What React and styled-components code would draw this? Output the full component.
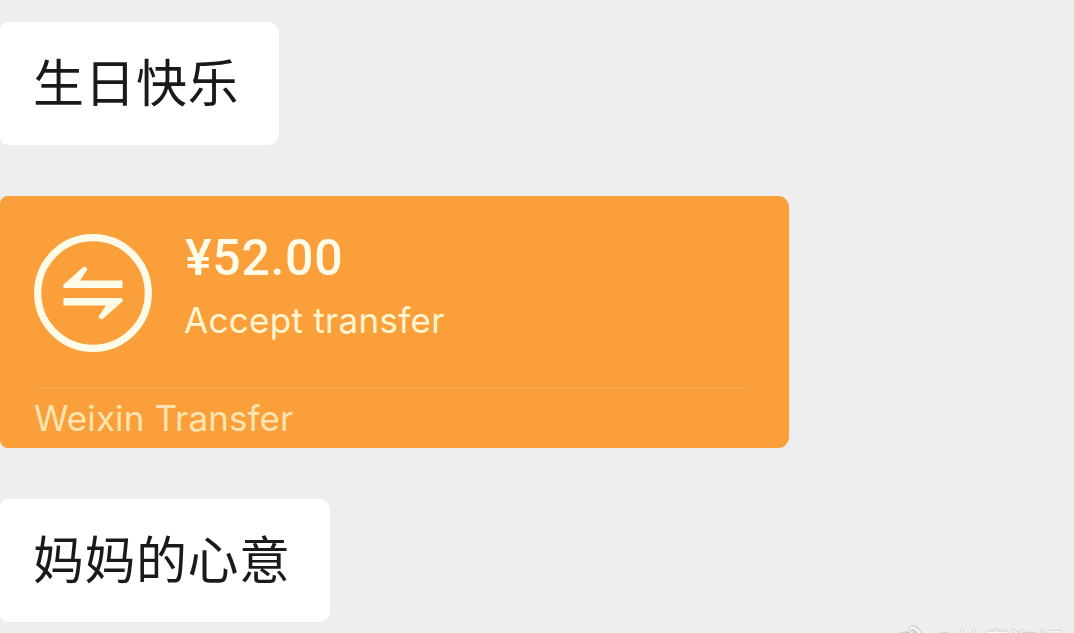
import React from 'react';
import styled, { createGlobalStyle } from 'styled-components';

const GlobalStyle = createGlobalStyle`
  * {
    box-sizing: border-box;
  }

  body {
    margin: 0;
    background: #eee;
    overflow: hidden;
  }
`;

const Chat = styled.main`
  position: relative;
  display: flex;
  flex-direction: column;
  align-items: flex-start;
  gap: 51px;
  height: 633px;
  padding-top: 22px;
  overflow: hidden;
  background: #eee;
  font-family: Inter, 'Noto Sans CJK SC', sans-serif;
`;

const Bubble = styled.div`
  display: flex;
  align-items: center;
  width: ${(props) => props.$width}px;
  height: 123px;
  flex-shrink: 0;
  padding: 0 0 7px 33px;
  border-radius: 8px 11px 11px 8px;
  background: #fff;
  color: #1a1a1a;
  font-family: 'Noto Sans CJK SC', sans-serif;
  font-size: 51px;
  line-height: 72px;
  letter-spacing: 0.5px;
  white-space: nowrap;
`;

const TransferCard = styled.section`
  width: 789px;
  height: 252px;
  flex-shrink: 0;
  padding: 38px 38px 0 34px;
  border-radius: 8px 11px 11px 8px;
  background: #fb9f3a;
`;

const TransferBody = styled.div`
  display: flex;
  gap: 32px;
  height: 154px;
`;

const TransferIcon = styled.svg`
  width: 118px;
  height: 118px;
  flex-shrink: 0;
`;

const TransferInfo = styled.div`
  display: flex;
  flex-direction: column;
`;

const Amount = styled.div`
  height: 49px;
  padding-left: 1px;
  color: #fffbe9;
  font-family: Roboto, sans-serif;
  font-size: 50px;
  font-weight: 500;
  line-height: 48px;
  letter-spacing: 0.7px;
`;

const Status = styled.div`
  margin-top: 15px;
  color: #fff5d2;
  font-size: 35px;
  line-height: 44px;
  letter-spacing: 0.3px;
`;

const TransferFooter = styled.footer`
  padding-top: 7px;
  border-top: 1px solid #fcaa4d;
  color: #fee4b0;
  font-size: 35px;
  line-height: 44px;
  letter-spacing: 0.1px;
`;

// Sits over the bottom right corner and runs past the edge
const Watermark = styled.div`
  position: absolute;
  top: 626px;
  right: 10px;
  display: flex;
  align-items: flex-start;
  gap: 5px;
  color: #fafafa;
  font-family: 'Noto Sans CJK SC', sans-serif;
  font-size: 27px;
  line-height: 32px;
  text-shadow: 0 0 2px #888;
  white-space: nowrap;
`;

const WeiboIcon = styled.svg`
  width: 32px;
  height: 28px;
  filter: drop-shadow(0 0 1px #888);
`;

function App() {
  return (
    <>
      <GlobalStyle />
      <Chat>
        <Bubble $width={279}>生日快乐</Bubble>

        <TransferCard>
          <TransferBody>
            <TransferIcon viewBox="0 0 118 118" fill="none">
              <circle cx="59" cy="59" r="55.3" stroke="#fffbe9" strokeWidth="7.2" />
              <path
                d="M88.5 46.5v7.5H31.5c-2.5 0-3-2.5-1.3-4.1L49 33.2c1.5-1.4 5 .3 4.2 2.5L46 46.5z"
                fill="#fffbe9"
              />
              <path
                d="M29.5 71.5V64H86.5c2.5 0 3 2.5 1.3 4.1L69 84.8c-1.5 1.4-5-.3-4.2-2.5L72 71.5z"
                fill="#fffbe9"
              />
            </TransferIcon>
            <TransferInfo>
              <Amount>¥52.00</Amount>
              <Status>Accept transfer</Status>
            </TransferInfo>
          </TransferBody>
          <TransferFooter>Weixin Transfer</TransferFooter>
        </TransferCard>

        <Bubble $width={330}>妈妈的心意</Bubble>

        <Watermark>
          <WeiboIcon viewBox="0 0 32 28" fill="none" stroke="#fafafa" strokeWidth="2.5">
            <ellipse cx="13" cy="17" rx="11" ry="9" />
            <path d="M17 2c6-1 11 4 10 10M17 7c3 0 6 2 5 5" />
          </WeiboIcon>
          <span>@扶青海娱</span>
        </Watermark>
      </Chat>
    </>
  );
}

export default App;
